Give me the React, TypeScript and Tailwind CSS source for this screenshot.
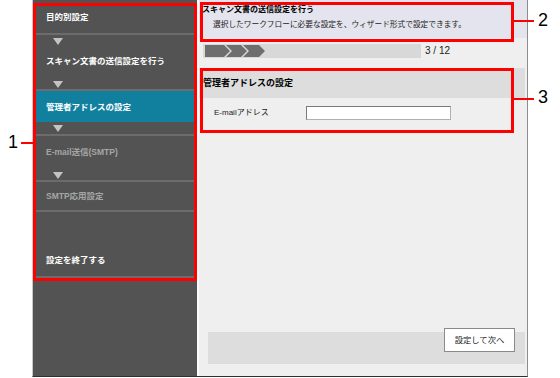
import React from "react";

const FONT = '"Liberation Sans", "Noto Sans CJK JP", sans-serif';

function Arrow() {
  return (
    <svg width="10" height="7" viewBox="0 0 10 7" className="block">
      <polygon points="0,0 10,0 5,7" fill="#c4c4c4" />
    </svg>
  );
}

function Line() {
  return <div className="h-[2px] bg-[#6c6c6c]" />;
}

export default function App() {
  return (
    <div
      className="relative w-[560px] h-[378px] bg-white overflow-hidden flex"
      style={{ fontFamily: FONT }}
    >
      {/* window frame */}
      <div className="ml-[32px] w-[496px] h-[377px] flex border-l border-[#c8c8c8] border-r border-r-[#8c8c8c] border-b border-b-[#2e2e2e]">
        {/* sidebar */}
        <div className="w-[164px] bg-[#535353] flex flex-col text-[8.5px] font-bold leading-[10px]">
          <div className="h-[33px] flex items-center pl-[13px] text-white">目的別設定</div>
          <Line />
          <div className="h-[12px] flex items-center pl-[20px]"><Arrow /></div>
          <div className="h-[28px] flex items-center pl-[13px] text-white">スキャン文書の送信設定を行う</div>
          <div className="h-[14px] pt-[6px] pl-[20px]"><Arrow /></div>
          <Line />
          <div className="h-[31px] flex items-center pl-[13px] text-white bg-[#11809f]">管理者アドレスの設定</div>
          <div className="h-[12px] pt-[3px] pl-[20px]"><Arrow /></div>
          <Line />
          <div className="h-[32px] flex items-center pl-[13px] text-[#a6a6a6]">E-mail送信(SMTP)</div>
          <div className="h-[12px] pt-[4px] pl-[20px]"><Arrow /></div>
          <Line />
          <div className="h-[28px] flex items-center pl-[13px] text-[#a6a6a6]">SMTP応用設定</div>
          <Line />
          <div className="h-[64px] pt-[43px] pl-[13px] text-white">設定を終了する</div>
          <Line />
        </div>

        {/* content */}
        <div className="flex-1 flex flex-col bg-[#efefef] border-l-2 border-[#fafafa]">
          <div className="h-[38px] bg-[#e4e4ee] pt-[5px] pl-[3px] leading-[10px]">
            <div className="text-[8px] font-bold text-black">スキャン文書の送信設定を行う</div>
            <div className="mt-[5px] pl-[11px] text-[7.7px] text-[#222]">
              選択したワークフローに必要な設定を、ウィザード形式で設定できます。
            </div>
          </div>

          <div className="mt-[6px] flex items-center h-[14px]">
            <div className="ml-[4px] w-[218px] h-[14px] bg-[#d8d8d8]">
              <svg width="218" height="14" viewBox="0 0 218 14" className="block">
                <polygon points="2,1 21,1 27,7 21,13 2,13" fill="#6e6e6e" />
                <polygon points="23,1 38,1 44,7 38,13 23,13 29,7" fill="#6e6e6e" />
                <polygon points="40,1 56,1 62,7 56,13 40,13 46,7" fill="#6e6e6e" />
              </svg>
            </div>
            <div className="ml-[4px] text-[10px] leading-[10px] text-[#222]">3 / 12</div>
          </div>

          <div className="mt-[10px] mr-[2px] h-[30px] bg-[#dddddd] flex items-center pl-[4px] text-[9px] font-bold text-black leading-[10px]">
            管理者アドレスの設定
          </div>
          <div className="mt-[8px] h-[14px] flex items-center">
            <div className="w-[107px] pl-[15px] text-[8px] leading-[10px] text-[#222]">E-mailアドレス</div>
            <div className="w-[145px] h-[14px] bg-white border border-[#7a7a7a] border-b-[#b0b0b0] border-r-[#b0b0b0]" />
          </div>

          <div className="flex-1" />

          <div className="ml-[9px] mr-[2px] mb-[12px] h-[32px] bg-[#dddddd] flex items-start justify-end pr-[10px]">
            <div className="-mt-[4px] w-[71px] h-[24px] bg-white border border-[#8a8a8a] flex items-center justify-center text-[8.3px] leading-[10px] text-[#222]">
              設定して次へ
            </div>
          </div>
        </div>
      </div>

      {/* annotations */}
      <div className="absolute left-[33px] top-[3px] w-[164px] h-[278px] border-[3px] border-[#ff0000]" />
      <div className="absolute left-[200px] top-[2px] w-[314px] h-[40px] border-[3px] border-[#ff0000]" />
      <div className="absolute left-[200px] top-[68px] w-[314px] h-[65px] border-[3px] border-[#ff0000]" />

      <div className="absolute left-[21px] top-[142px] w-[12px] h-[2px] bg-[#ff0000]" />
      <div className="absolute left-[514px] top-[20px] w-[20px] h-[2px] bg-[#ff0000]" />
      <div className="absolute left-[514px] top-[98px] w-[20px] h-[2px] bg-[#ff0000]" />

      <div className="absolute left-[8px] top-[132px] text-[18px] leading-[20px] text-black">1</div>
      <div className="absolute left-[538px] top-[10px] text-[18px] leading-[20px] text-black">2</div>
      <div className="absolute left-[538px] top-[87px] text-[18px] leading-[20px] text-black">3</div>
    </div>
  );
}
